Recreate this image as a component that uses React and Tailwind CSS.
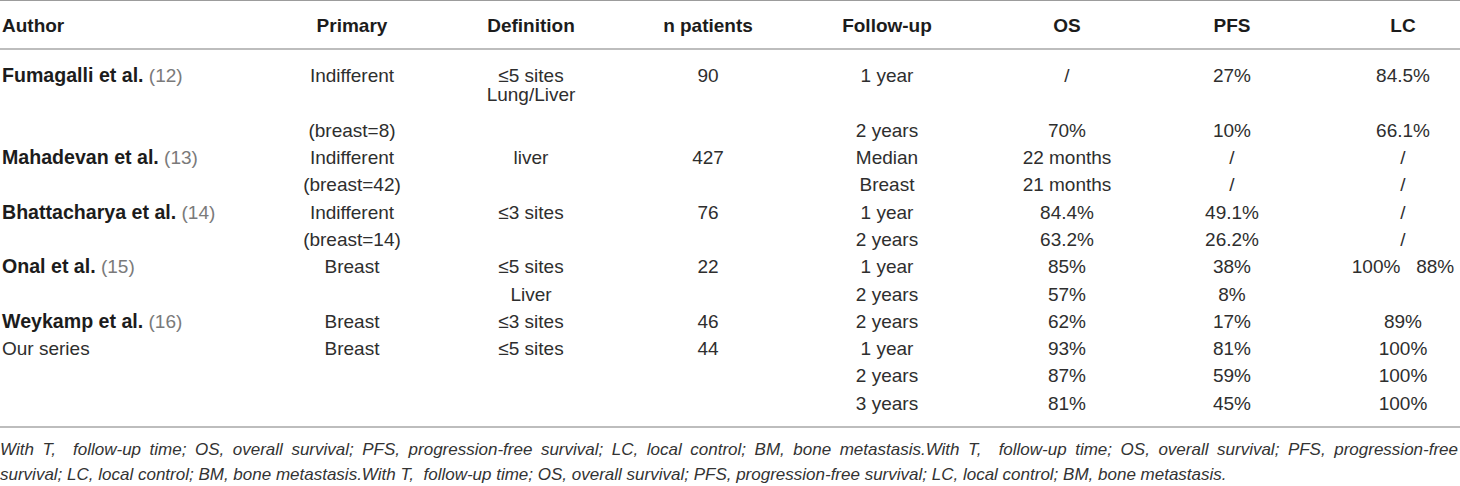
const cols = "grid-cols-[300px_104px_254px_100px_258px_102px_228px_114px]";

const rows = [
  [null, "(breast=8)", "", "", "2 years", "70%", "10%", "66.1%"],
  [{ name: "Mahadevan et al.", ref: "13" }, "Indifferent", "liver", "427", "Median", "22 months", "/", "/"],
  [null, "(breast=42)", "", "", "Breast", "21 months", "/", "/"],
  [{ name: "Bhattacharya et al.", ref: "14" }, "Indifferent", "≤3 sites", "76", "1 year", "84.4%", "49.1%", "/"],
  [null, "(breast=14)", "", "", "2 years", "63.2%", "26.2%", "/"],
  [{ name: "Onal et al.", ref: "15" }, "Breast", "≤5 sites", "22", "1 year", "85%", "38%", "100%   88%"],
  [null, "", "Liver", "", "2 years", "57%", "8%", ""],
  [{ name: "Weykamp et al.", ref: "16" }, "Breast", "≤3 sites", "46", "2 years", "62%", "17%", "89%"],
  ["Our series", "Breast", "≤5 sites", "44", "1 year", "93%", "81%", "100%"],
  [null, "", "", "", "2 years", "87%", "59%", "100%"],
  [null, "", "", "", "3 years", "81%", "45%", "100%"],
];

const headers = ["Author", "Primary", "Definition", "n patients", "Follow-up", "OS", "PFS", "LC"];

function AuthorCell({ value }) {
  if (!value) return <div />;
  if (typeof value === "string") return <div className="pl-[2px] whitespace-nowrap">{value}</div>;
  return (
    <div className="pl-[2px] whitespace-nowrap">
      <span className="font-bold text-[19.6px] text-[#1c1c1c]">{value.name}</span>{" "}
      <span className="text-[#7a7a7a]">({value.ref})</span>
    </div>
  );
}

export default function App() {
  return (
    <div
      className="w-[1460px] h-[486px] bg-white text-[#2e2e2e] overflow-hidden"
      style={{ fontFamily: '"Liberation Sans", Arial, sans-serif' }}
    >
      <div className="border-t border-[#9c9c9c]">
        <div className={`grid ${cols} h-[49px] items-center pt-[3px] text-[19px] font-bold text-[#1c1c1c] border-b-2 border-[#bdbdbd]`}>
          {headers.map((h, i) => (
            <div key={h} className={i === 0 ? "pl-[2px]" : "text-center whitespace-nowrap"}>
              {h}
            </div>
          ))}
        </div>

        <div className={`grid ${cols} h-[66.6px] items-start pt-[15.5px] text-[19px] leading-[19px]`}>
          <AuthorCell value={{ name: "Fumagalli et al.", ref: "12" }} />
          <div className="text-center">Indifferent</div>
          <div className="text-center">
            <div>≤5 sites</div>
            <div>Lung/Liver</div>
          </div>
          <div className="text-center">90</div>
          <div className="text-center">1 year</div>
          <div className="text-center">/</div>
          <div className="text-center">27%</div>
          <div className="text-center">84.5%</div>
        </div>

        {rows.map((r, i) => (
          <div key={i} className={`grid ${cols} h-[27.3px] items-center text-[19px] leading-[19px]`}>
            <AuthorCell value={r[0]} />
            {r.slice(1).map((c, j) => (
              <div key={j} className="text-center whitespace-pre">
                {c}
              </div>
            ))}
          </div>
        ))}

        <div className="mt-[9px] border-t-2 border-[#bdbdbd] pt-[9px] pr-[2px] text-[17px] leading-[25px] italic text-[#333]">
          <div className="text-justify [text-align-last:justify] whitespace-nowrap">
            With T,{"\u00a0\u00a0"}follow-up time; OS, overall survival; PFS, progression-free survival; LC, local control; BM, bone metastasis.With T,{"\u00a0\u00a0"}follow-up time; OS, overall survival; PFS, progression-free
          </div>
          <div className="whitespace-nowrap">
            survival; LC, local control; BM, bone metastasis.With T,{"\u00a0\u00a0"}follow-up time; OS, overall survival; PFS, progression-free survival; LC, local control; BM, bone metastasis.
          </div>
        </div>
      </div>
    </div>
  );
}
